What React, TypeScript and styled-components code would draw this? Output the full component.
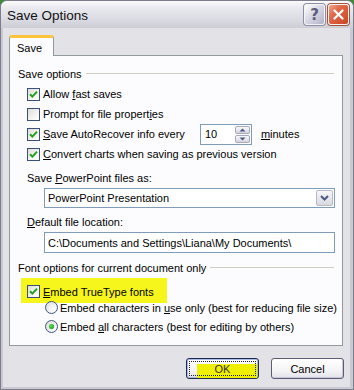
import styled, { createGlobalStyle } from "styled-components";

const GlobalStyle = createGlobalStyle`
	html, body {
		margin: 0;
		padding: 0;
		background: #3f8b3a;
	}
	body {
		font-family: "Liberation Sans", Arial, sans-serif;
		font-size: 11px;
		color: #000;
	}
`;

const Window = styled.div`
	width: 354px;
	height: 390px;
	box-sizing: border-box;
	display: flex;
	flex-direction: column;
	border: 1px solid #7c7c8a;
	border-radius: 7px 7px 0 0;
	overflow: hidden;
	background: #c9c9d3;
`;

const TitleBar = styled.div`
	height: 27px;
	flex-shrink: 0;
	display: flex;
	align-items: center;
	gap: 3px;
	padding: 0 4px 0 6px;
	background: linear-gradient(#fbfbfc 0%, #e9e9ef 25%, #dadae2 70%, #cdcdd7 100%);
`;

const Title = styled.span`
	flex: 1;
	font-size: 13.5px;
	color: #111;
	padding-top: 1px;
`;

const CaptionButton = styled.div<{ $close?: boolean }>`
	width: 21px;
	height: 21px;
	box-sizing: border-box;
	display: flex;
	align-items: center;
	justify-content: center;
	border-radius: 3px;
	border: 1px solid #f3f3f5;
	box-shadow: 0 0 0 1px ${(p) => (p.$close ? "#a0543e" : "#8d8da3")};
	background: ${(p) =>
		p.$close
			? "linear-gradient(135deg, #f1a58c 0%, #df6a4a 35%, #cc4526 100%)"
			: "linear-gradient(135deg, #ffffff 0%, #d8d8e4 45%, #b3b3c8 100%)"};
	color: #5c5c7e;
	font-family: "DejaVu Sans", sans-serif;
	font-size: 15px;
	font-weight: bold;
`;

const Body = styled.div`
	flex: 1;
	display: flex;
	flex-direction: column;
	margin: 0 3px 2px 2px;
	padding: 7px 7px 0 6px;
	background: #e3e2e7;
`;

const TabStrip = styled.div`
	display: flex;
	height: 21px;
	flex-shrink: 0;
	margin-bottom: -1px;
	position: relative;
	z-index: 1;
`;

const Tab = styled.div`
	width: 45px;
	box-sizing: border-box;
	padding: 4px 0 0 7px;
	background: #fcfcfe;
	border: 1px solid #919b9c;
	border-top: 3px solid #ffc43c;
	border-bottom: none;
	border-radius: 3px 3px 0 0;
`;

const Panel = styled.div`
	height: 291px;
	flex-shrink: 0;
	box-sizing: border-box;
	display: flex;
	flex-direction: column;
	padding: 11px 8px 0 8px;
	background: #fcfcfe;
	border: 1px solid #919b9c;
	white-space: nowrap;
	& > * {
		flex-shrink: 0;
	}
`;

const GroupHeader = styled.div<{ $gap?: number }>`
	display: flex;
	align-items: center;
	gap: 4px;
	height: 13px;
	margin-top: ${(p) => p.$gap ?? 0}px;
	&::after {
		content: "";
		flex: 1;
		border-top: 1px solid #d0d0bf;
	}
`;

const CheckRow = styled.div<{ $gap?: number }>`
	display: flex;
	align-items: center;
	gap: 3px;
	height: 20px;
	padding-left: 9px;
	margin-top: ${(p) => p.$gap ?? 0}px;
`;

const Highlight = styled.div`
	display: flex;
	align-items: center;
	gap: 3px;
	width: 146px;
	height: 25px;
	box-sizing: border-box;
	margin: 4px 0 0 3px;
	padding: 2px 0 0 6px;
	background: #f6f61c;
`;

const Box = styled.span`
	width: 13px;
	height: 13px;
	box-sizing: border-box;
	flex-shrink: 0;
	display: flex;
	align-items: center;
	justify-content: center;
	border: 1px solid #38507a;
	background: linear-gradient(135deg, #dcdcd8 0%, #f4f4f2 60%, #ffffff 100%);
`;

const Radio = styled.span`
	width: 13px;
	height: 13px;
	box-sizing: border-box;
	flex-shrink: 0;
	display: flex;
	align-items: center;
	justify-content: center;
	border-radius: 50%;
	border: 1px solid #3c5682;
	background: radial-gradient(circle at 70% 70%, #ffffff 0%, #f0f0ee 45%, #d6d6d2 100%);
`;

const Dot = styled.span`
	width: 5px;
	height: 5px;
	border-radius: 50%;
	background: radial-gradient(circle at 40% 40%, #5ce05c 0%, #21a121 70%);
	box-shadow: 0 0 1px #8fd28f;
`;

const RadioList = styled.div`
	display: flex;
	flex-direction: column;
	margin-top: -5px;
`;

const RadioRow = styled.div`
	display: flex;
	align-items: center;
	gap: 2px;
	height: 19px;
	padding-left: 27px;
`;

const FieldLabel = styled.div<{ $gap: number }>`
	height: 13px;
	line-height: 13px;
	padding-left: 9px;
	margin-top: ${(p) => p.$gap}px;
`;

const Field = styled.div<{ $h: number; $gap: number }>`
	display: flex;
	align-items: center;
	width: 291px;
	height: ${(p) => p.$h}px;
	box-sizing: border-box;
	margin: ${(p) => p.$gap}px 0 0 26px;
	padding-left: 3px;
	border: 1px solid #7f9db9;
	background: #fff;
`;

const FieldText = styled.span`
	flex: 1;
`;

const DropButton = styled.span`
	width: 17px;
	align-self: stretch;
	margin: 1px;
	box-sizing: border-box;
	display: flex;
	align-items: center;
	justify-content: center;
	border: 1px solid #b8b8c8;
	border-radius: 2px;
	background: linear-gradient(#f8f8fa, #d8d8e2);
`;

const Spin = styled.div`
	display: flex;
	align-items: center;
	width: 52px;
	height: 21px;
	box-sizing: border-box;
	margin: 0 6px 0 12px;
	padding-left: 4px;
	border: 1px solid #7f9db9;
	background: #fff;
`;

const SpinButtons = styled.span`
	display: flex;
	flex-direction: column;
	gap: 1px;
	width: 15px;
	align-self: stretch;
	margin: 1px;
`;

const SpinPart = styled.span`
	flex: 1;
	display: flex;
	align-items: center;
	justify-content: center;
	border: 1px solid #a8a8bc;
	border-radius: 2px;
	background: linear-gradient(#fafafc, #d4d4de);
`;

const Footer = styled.div`
	display: flex;
	justify-content: flex-end;
	gap: 12px;
	padding-top: 12px;
	margin-right: -1px;
`;

const Button = styled.div<{ $default?: boolean }>`
	position: relative;
	width: 73px;
	height: 21px;
	box-sizing: border-box;
	display: flex;
	align-items: center;
	justify-content: center;
	border: 1px solid ${(p) => (p.$default ? "#1e2c50" : "#5c5c76")};
	border-radius: 3px;
	background: linear-gradient(#ffffff 0%, #f4f4f6 60%, #e2e2ea 100%);
	box-shadow: ${(p) =>
		p.$default ? "inset 0 0 0 1px #a9b9e6" : "inset -1px -1px 0 #c6c6d4"};
	&::after {
		content: "";
		display: ${(p) => (p.$default ? "block" : "none")};
		position: absolute;
		inset: 2px;
		border: 1px dotted #222;
	}
`;

const Marker = styled.span`
	position: absolute;
	left: 10px;
	top: 5px;
	right: 1px;
	bottom: 0;
	background: #eef000;
`;

const ButtonText = styled.span`
	position: relative;
	z-index: 1;
	color: #333;
`;

function Check({ checked }: { checked?: boolean }) {
	return (
		<Box>
			{checked && (
				<svg width="9" height="9" viewBox="0 0 9 9">
					<path d="M1 4.2 L3.4 6.6 L8 1.6" fill="none" stroke="#21a121" strokeWidth="2" />
				</svg>
			)}
		</Box>
	);
}

function Chevron() {
	return (
		<svg width="9" height="6" viewBox="0 0 9 6">
			<path d="M1 1 L4.5 4.5 L8 1" fill="none" stroke="#4a5a80" strokeWidth="2" />
		</svg>
	);
}

export default function App() {
	return (
		<>
			<GlobalStyle />
			<Window>
				<TitleBar>
					<Title>Save Options</Title>
					<CaptionButton>?</CaptionButton>
					<CaptionButton $close>
						<svg width="11" height="11" viewBox="0 0 11 11">
							<path d="M1.5 1.5 L9.5 9.5 M9.5 1.5 L1.5 9.5" stroke="#fff" strokeWidth="2.2" strokeLinecap="round" />
						</svg>
					</CaptionButton>
				</TitleBar>
				<Body>
					<TabStrip>
						<Tab>Save</Tab>
					</TabStrip>
					<Panel>
						<GroupHeader>Save options</GroupHeader>
						<CheckRow $gap={4}>
							<Check checked />
							<span>Allow <u>f</u>ast saves</span>
						</CheckRow>
						<CheckRow>
							<Check />
							<span>Prompt for file propert<u>i</u>es</span>
						</CheckRow>
						<CheckRow>
							<Check checked />
							<span><u>S</u>ave AutoRecover info every</span>
							<Spin>
								<FieldText>10</FieldText>
								<SpinButtons>
									<SpinPart>
										<svg width="7" height="4" viewBox="0 0 7 4">
											<path d="M0.5 3.5 L3.5 0.5 L6.5 3.5 Z" fill="#4a5a80" />
										</svg>
									</SpinPart>
									<SpinPart>
										<svg width="7" height="4" viewBox="0 0 7 4">
											<path d="M0.5 0.5 L3.5 3.5 L6.5 0.5 Z" fill="#4a5a80" />
										</svg>
									</SpinPart>
								</SpinButtons>
							</Spin>
							<span><u>m</u>inutes</span>
						</CheckRow>
						<CheckRow>
							<Check checked />
							<span><u>C</u>onvert charts when saving as previous version</span>
						</CheckRow>
						<FieldLabel $gap={8}>Save <u>P</u>owerPoint files as:</FieldLabel>
						<Field $h={20} $gap={3}>
							<FieldText>PowerPoint Presentation</FieldText>
							<DropButton>
								<Chevron />
							</DropButton>
						</Field>
						<FieldLabel $gap={8}><u>D</u>efault file location:</FieldLabel>
						<Field $h={21} $gap={3}>
							<FieldText>C:\Documents and Settings\Liana\My Documents\</FieldText>
						</Field>
						<GroupHeader $gap={8}>Font options for current document only</GroupHeader>
						<Highlight>
							<Check checked />
							<span><u>E</u>mbed TrueType fonts</span>
						</Highlight>
						<RadioList>
							<RadioRow>
								<Radio />
								<span>Embed characters in <u>u</u>se only (best for reducing file size)</span>
							</RadioRow>
							<RadioRow>
								<Radio>
									<Dot />
								</Radio>
								<span>Embed <u>a</u>ll characters (best for editing by others)</span>
							</RadioRow>
						</RadioList>
					</Panel>
					<Footer>
						<Button $default>
							<Marker />
							<ButtonText>OK</ButtonText>
						</Button>
						<Button>Cancel</Button>
					</Footer>
				</Body>
			</Window>
		</>
	);
}
